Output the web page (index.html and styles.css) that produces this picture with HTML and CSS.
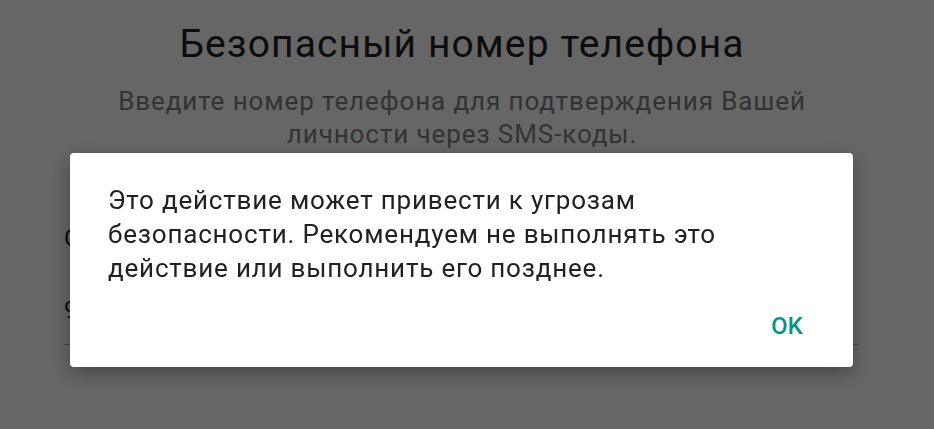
FILE: index.html
```html
<!DOCTYPE html>
<html lang="ru">
<head>
<meta charset="utf-8">
<link rel="stylesheet" href="styles.css">
</head>
<body>
<main class="page">
  <h1 class="title">Безопасный номер телефона</h1>
  <p class="subtitle">Введите номер телефона для подтверждения Вашей личности через SMS-коды.</p>
  <div class="form">
    <div class="field field-country">Страна</div>
    <div class="field field-phone">9</div>
  </div>
</main>
<div class="overlay">
  <div class="dialog" role="dialog">
    <p class="dialog-text">Это действие может привести к угрозам безопасности. Рекомендуем не выполнять это действие или выполнить его позднее.</p>
    <div class="dialog-actions">
      <button class="btn-ok">OK</button>
    </div>
  </div>
</div>
</body>
</html>
```
FILE: styles.css
```css
html, body {
  margin: 0;
  padding: 0;
  background: #ffffff;
  font-family: Roboto, "Noto Sans", "Liberation Sans", sans-serif;
}

.page {
  padding: 21px 10px 0 0;
  display: flex;
  flex-direction: column;
  align-items: center;
}

.title {
  margin: 0;
  font-size: 39px;
  line-height: 46px;
  letter-spacing: 1.1px;
  font-weight: 400;
  color: #222222;
}

.subtitle {
  margin: 18px 0 0 0;
  width: 740px;
  text-align: center;
  font-size: 26px;
  line-height: 33px;
  letter-spacing: 0.9px;
  color: #808080;
}

.form {
  align-self: stretch;
  margin: 72px 0 0 64px;
  width: 794px;
}

.field {
  font-size: 24px;
  line-height: 30px;
  color: #222222;
}

.field-phone {
  margin-top: 42px;
  padding-bottom: 19px;
  border-bottom: 1px solid #b0b0b0;
}

.overlay {
  position: fixed;
  inset: 0;
  background: rgba(0, 0, 0, 0.6);
  padding: 153px 81px 0 70px;
}

.dialog {
  background: #ffffff;
  border-radius: 4px;
  height: 214px;
  box-sizing: border-box;
  padding: 30px 38px 0 38px;
  box-shadow: 0 6px 20px rgba(0, 0, 0, 0.35);
  display: flex;
  flex-direction: column;
}

.dialog-text {
  margin: 0;
  width: 680px;
  font-size: 26px;
  line-height: 34px;
  letter-spacing: 0.8px;
  color: #212121;
}

.dialog-actions {
  display: flex;
  justify-content: flex-end;
  margin-top: 22px;
}

.btn-ok {
  border: 0;
  background: transparent;
  padding: 4px 12px;
  font-family: Roboto, "Noto Sans", sans-serif;
  font-size: 24px;
  line-height: 30px;
  font-weight: 500;
  color: #009688;
}
```
